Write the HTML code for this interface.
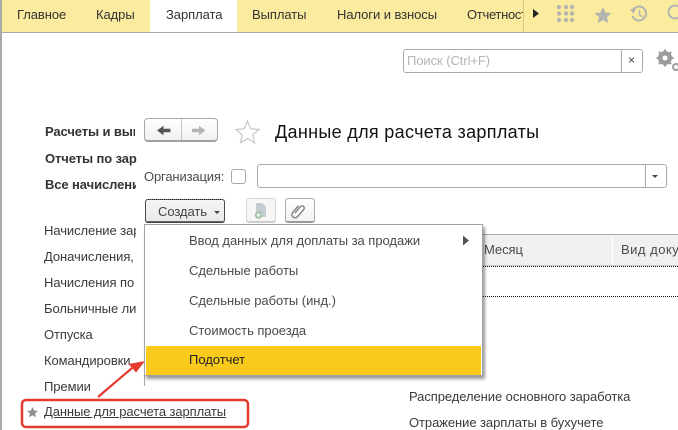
<!DOCTYPE html>
<html lang="ru"><head><meta charset="utf-8"><style>
html,body{margin:0;padding:0;background:#fff}
body{width:678px;height:430px;overflow:hidden;position:relative;font-family:"Liberation Sans",Arial,sans-serif;font-size:13px;color:#4b4b4b;letter-spacing:-.07px}
.t{position:absolute;white-space:nowrap;line-height:14px}
.box{position:absolute;box-sizing:border-box;border:1px solid #a9a9a9;border-radius:3px;background:#fff}
.tab{position:absolute;top:8px;line-height:14px;color:#333;white-space:nowrap}
.side{color:#3a3a3a}
.b{font-weight:bold;color:#333;letter-spacing:-.1px}
.m{position:absolute;left:189px;color:#4a4a4a;line-height:14px;white-space:nowrap;letter-spacing:-.03px}
</style></head><body>
<!-- top bar -->
<div style="position:absolute;left:0;top:0;width:678px;height:32px;background:#fbeb9e;border-bottom:1px solid #a9a9a9"></div>
<div style="position:absolute;left:150px;top:0;width:87px;height:32px;background:#fff"></div>
<div style="position:absolute;left:0;top:0;width:2px;height:430px;background:#a9a9a9"></div>
<div class="tab" style="left:17px">Главное</div>
<div class="tab" style="left:96px">Кадры</div>
<div class="tab" style="left:166px">Зарплата</div>
<div class="tab" style="left:252px">Выплаты</div>
<div class="tab" style="left:337px">Налоги и взносы</div>
<div class="tab" style="left:467px;width:56px;overflow:hidden;letter-spacing:-.3px">Отчетность</div>
<div style="position:absolute;left:523px;top:0;width:1px;height:32px;background:#d6c77f"></div>
<svg style="position:absolute;left:0;top:0" width="678" height="80" viewBox="0 0 678 80">
<path d="M533 9l6 4.500-6 4.500z" fill="#222"/>
<g fill="#b5b5b0"><circle cx="559" cy="7" r="2.200"/><circle cx="566" cy="7" r="2.200"/><circle cx="572" cy="7" r="2.200"/><circle cx="559" cy="13.500" r="2.200"/><circle cx="566" cy="13.500" r="2.200"/><circle cx="572" cy="13.500" r="2.200"/><circle cx="559" cy="20" r="2.200"/><circle cx="566" cy="20" r="2.200"/><circle cx="572" cy="20" r="2.200"/></g>
<path d="M603 7l2.500 5.500 6 .6-4.500 4 1.300 6-5.300-3.100-5.300 3.100 1.300-6-4.500-4 6-.6z" fill="#b5b5b0"/>
<path d="M633 10a7 7 0 1 1-.5 6" fill="none" stroke="#b5b5b0" stroke-width="2"/><path d="M630 9l6 .5-3 4z" fill="#b5b5b0"/><path d="M639.500 10v5l3.500 2" fill="none" stroke="#b5b5b0" stroke-width="1.500"/>
<circle cx="675" cy="12" r="6.500" fill="none" stroke="#b5b5b0" stroke-width="2"/>
<g fill="none" stroke="#9c9c9c"><circle cx="665" cy="58" r="5" stroke-width="4"/><path d="M665 49.500v17M656.500 58h17M659 52l12 12M671 52l-12 12" stroke-width="2.200"/></g>
<circle cx="665" cy="58" r="2.500" fill="#fff"/>
<circle cx="676" cy="67" r="3" fill="none" stroke="#9c9c9c" stroke-width="2"/>
</svg>
<!-- search -->
<div class="box" style="left:403px;top:49px;width:240px;height:24px"></div>
<div style="position:absolute;left:621px;top:50px;width:1px;height:22px;background:#a9a9a9"></div>
<div class="t" style="left:407px;top:54px;color:#b4b4b4">Поиск (Ctrl+F)</div>
<div class="t" style="left:628px;top:53px;color:#444;font-size:12px">×</div>
<!-- left -->
<div class="t b" style="left:45px;top:125px;width:90px;overflow:hidden">Расчеты и выплаты</div>
<div class="t b" style="left:45px;top:152px;width:92px;overflow:hidden">Отчеты по зарплате</div>
<div class="t b" style="left:45px;top:178px;width:91px;overflow:hidden">Все начисления</div>
<div class="t side" style="left:44px;top:224px;width:92px;overflow:hidden">Начисление зарплаты</div>
<div class="t side" style="left:44px;top:250px;width:92px;overflow:hidden">Доначисления,</div>
<div class="t side" style="left:44px;top:276px;width:92px;overflow:hidden">Начисления по</div>
<div class="t side" style="left:44px;top:302px;width:92px;overflow:hidden">Больничные листы</div>
<div class="t side" style="left:44px;top:328px">Отпуска</div>
<div class="t side" style="left:44px;top:354px;width:92px;overflow:hidden">Командировки</div>
<div class="t side" style="left:44px;top:380px">Премии</div>
<!-- nav buttons -->
<div style="position:absolute;left:144px;top:118px;width:74px;height:24px;box-sizing:border-box;border:1px solid #a9a9a9;border-bottom:2px solid #a0a0a0;border-radius:4px;background:linear-gradient(#fff,#f1f1f1)"></div>
<div style="position:absolute;left:181px;top:119px;width:1px;height:21px;background:#c4c4c4"></div>
<svg style="position:absolute;left:130px;top:110px" width="230" height="130" viewBox="0 0 230 130">
<path d="M27 20.500l6.500-4.700v3h7v3.400h-7v3z" fill="#555"/>
<path d="M75.500 20.500l-6.500-4.700v3h-7v3.400h7v3z" fill="#b5b5b5"/>
<path d="M117.500 11l3.300 7.800 8.200.7-6.300 5.400 1.900 8-7.100-4.300-7.100 4.300 1.900-8-6.300-5.400 8.200-.7z" fill="#fff" stroke="#c2c8cc" stroke-width="1.200"/>
</svg>
<div class="t" style="left:275px;top:122px;font-size:18px;line-height:20px;color:#111;letter-spacing:.32px">Данные для расчета зарплаты</div>
<div class="t" style="left:144px;top:170px;letter-spacing:-.15px">Организация:</div>
<div class="box" style="left:231px;top:169px;width:15px;height:15px"></div>
<div class="box" style="left:257px;top:164px;width:410px;height:24px"></div>
<div style="position:absolute;left:645px;top:165px;width:1px;height:22px;background:#a9a9a9"></div>
<svg style="position:absolute;left:650px;top:172px" width="10" height="8"><path d="M2 3h6l-3 3z" fill="#444"/></svg>
<!-- create -->
<div style="position:absolute;left:145px;top:199px;width:80px;height:24px;box-sizing:border-box;border:1px solid #777;border-bottom:2px solid #666;border-radius:3px;background:linear-gradient(#f6f6f6,#e8e8e8);outline:1px dotted #222;outline-offset:-1px"></div>
<div class="t" style="left:158px;top:205px;color:#444">Создать</div>
<svg style="position:absolute;left:212px;top:209px" width="10" height="8"><path d="M2 2h6l-3 3z" fill="#444"/></svg>
<div style="position:absolute;left:246px;top:198px;width:30px;height:25px;box-sizing:border-box;border:1px solid #d4d4d4;border-bottom:2px solid #ccc;border-radius:3px;background:#f6f6f6"></div>
<div style="position:absolute;left:285px;top:198px;width:30px;height:25px;box-sizing:border-box;border:1px solid #aaa;border-bottom:2px solid #999;border-radius:3px;background:linear-gradient(#fff,#f2f2f2)"></div>
<svg style="position:absolute;left:246px;top:198px" width="70" height="25" viewBox="0 0 70 25">
<path d="M10 5h6l4 4v10H10z" fill="#c4ccd1"/><circle cx="12.500" cy="17" r="3.800" fill="#a3c4a9"/><path d="M10.500 17h4M12.500 15v4" stroke="#fff"/>
<path d="M49 15l5.500-6.500a2.200 2.200 0 0 1 3.300 2.900l-6.500 7.500a3.200 3.200 0 0 1-4.800-4.200l6-7" fill="none" stroke="#777" stroke-width="1.300"/>
</svg>
<!-- table -->
<div style="position:absolute;left:144px;top:234px;width:534px;height:32px;box-sizing:border-box;background:#f0f0f0;border-top:1px solid #a9a9a9;border-bottom:1px solid #c9c9c9"></div>
<div style="position:absolute;left:612px;top:235px;width:1px;height:30px;background:#fff"></div>
<div class="t" style="left:484px;top:243px">Месяц</div>
<div class="t" style="left:621px;top:243px;letter-spacing:.5px">Вид докум</div>
<div style="position:absolute;left:144px;top:266px;width:534px;border-top:1px dotted #111"></div>
<div style="position:absolute;left:144px;top:296px;width:534px;border-top:1px dotted #111"></div>
<div style="position:absolute;left:144px;top:266px;width:1px;height:120px;background:#a9a9a9"></div>
<div class="t side" style="left:409px;top:390px">Распределение основного заработка</div>
<div class="t side" style="left:409px;top:416px">Отражение зарплаты в бухучете</div>
<!-- menu -->
<div style="position:absolute;left:144px;top:224px;width:339px;height:152px;box-sizing:border-box;background:#fff;border:1px solid #a3a3a3;box-shadow:2px 3px 3px rgba(0,0,0,.4)"></div>
<div style="position:absolute;left:146px;top:346px;width:335px;height:29px;background:#f9ca1c"></div>
<div class="m" style="top:234px">Ввод данных для доплаты за продажи</div>
<svg style="position:absolute;left:462px;top:235px" width="8" height="11"><path d="M1 .5l6 5-6 5z" fill="#555"/></svg>
<div class="m" style="top:264px">Сдельные работы</div>
<div class="m" style="top:294px">Сдельные работы (инд.)</div>
<div class="m" style="top:324px">Стоимость проезда</div>
<div class="m" style="top:353px;color:#222">Подотчет</div>
<!-- highlight -->
<svg style="position:absolute;left:0;top:340px" width="260" height="90" viewBox="0 0 260 90">
<path d="M32.500 67l1.600 3.500 3.900.4-2.900 2.500.9 3.800-3.500-2-3.500 2 .9-3.800-2.900-2.500 3.900-.4z" fill="#8f8f8f"/>
<rect x="22" y="60" width="226" height="27" rx="4" fill="none" stroke="#e53a2f" stroke-width="2.500"/>
<path d="M98 57l34-29" stroke="#e53a2f" stroke-width="2.200"/><path d="M145 21l-16.500 3 7.500 8.500z" fill="#e53a2f"/>
</svg>
<div class="t" style="left:44px;top:405px;color:#3a3a3a;text-decoration:underline;letter-spacing:-.1px">Данные для расчета зарплаты</div>
</body></html>
